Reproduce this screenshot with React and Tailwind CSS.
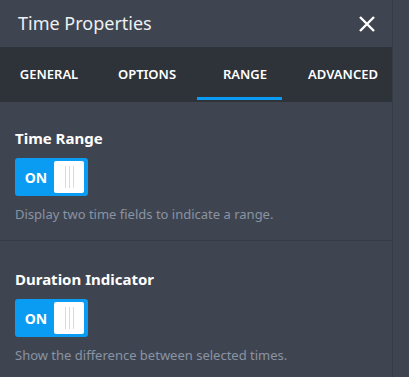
import { useState } from 'react';

const tabs = ['General', 'Options', 'Range', 'Advanced'];

function Toggle({ on, onChange }) {
  return (
    <button
      onClick={onChange}
      className="flex h-[38px] w-[73px] items-center rounded-[3px] bg-[#0a9cf2] pl-[3px] pr-[4px]"
    >
      <span className="w-[36px] text-center text-[14px] font-bold text-white">{on ? 'ON' : 'OFF'}</span>
      <span className="flex h-[32px] w-[30px] items-center justify-center gap-[3px] rounded-[2px] bg-white">
        <span className="h-[22px] w-px bg-[#d8dbe0]" />
        <span className="h-[22px] w-px bg-[#d8dbe0]" />
        <span className="h-[22px] w-px bg-[#d8dbe0]" />
      </span>
    </button>
  );
}

function Setting({ title, desc, last }) {
  const [on, setOn] = useState(true);
  return (
    <div className={`px-[15px] pb-[17px] ${last ? 'pt-[28px]' : 'pt-[26px] border-b border-[#363b45]'}`}>
      <h3 className="text-[15px] font-bold leading-[20px] text-white">{title}</h3>
      <div className="mt-[10px]">
        <Toggle on={on} onChange={() => setOn(!on)} />
      </div>
      <p className="mt-[9px] text-[13px] leading-[18px] text-[#8a93a3]">{desc}</p>
    </div>
  );
}

export default function App() {
  const [active, setActive] = useState('Range');

  return (
    <div className="flex h-[377px] w-[409px] bg-[#3f4550] font-['Noto_Sans',sans-serif]">
      <div className="flex w-[393px] flex-col border-r border-[#353a43]">
        <div className="flex h-[47px] shrink-0 items-center justify-between pl-[18px] pr-[15px]">
          <h2 className="text-[18px] text-[#eef0f3]">Time Properties</h2>
          <button className="text-white">
            <svg width="20" height="20" viewBox="0 0 20 20" fill="none" stroke="currentColor" strokeWidth="2.4">
              <path d="M3 3L17 17M17 3L3 17" />
            </svg>
          </button>
        </div>
        <div className="flex h-[55px] shrink-0 bg-[#2e3239]">
          {tabs.map((t) => (
            <button
              key={t}
              onClick={() => setActive(t)}
              className="relative flex flex-1 items-center justify-center text-[13px] font-semibold uppercase text-white"
            >
              {t}
              {active === t && <span className="absolute bottom-[2px] left-[1px] right-[12px] h-[3px] bg-[#0a9cf2]" />}
            </button>
          ))}
        </div>
        <Setting title="Time Range" desc="Display two time fields to indicate a range." />
        <Setting title="Duration Indicator" desc="Show the difference between selected times." last />
      </div>
    </div>
  );
}
